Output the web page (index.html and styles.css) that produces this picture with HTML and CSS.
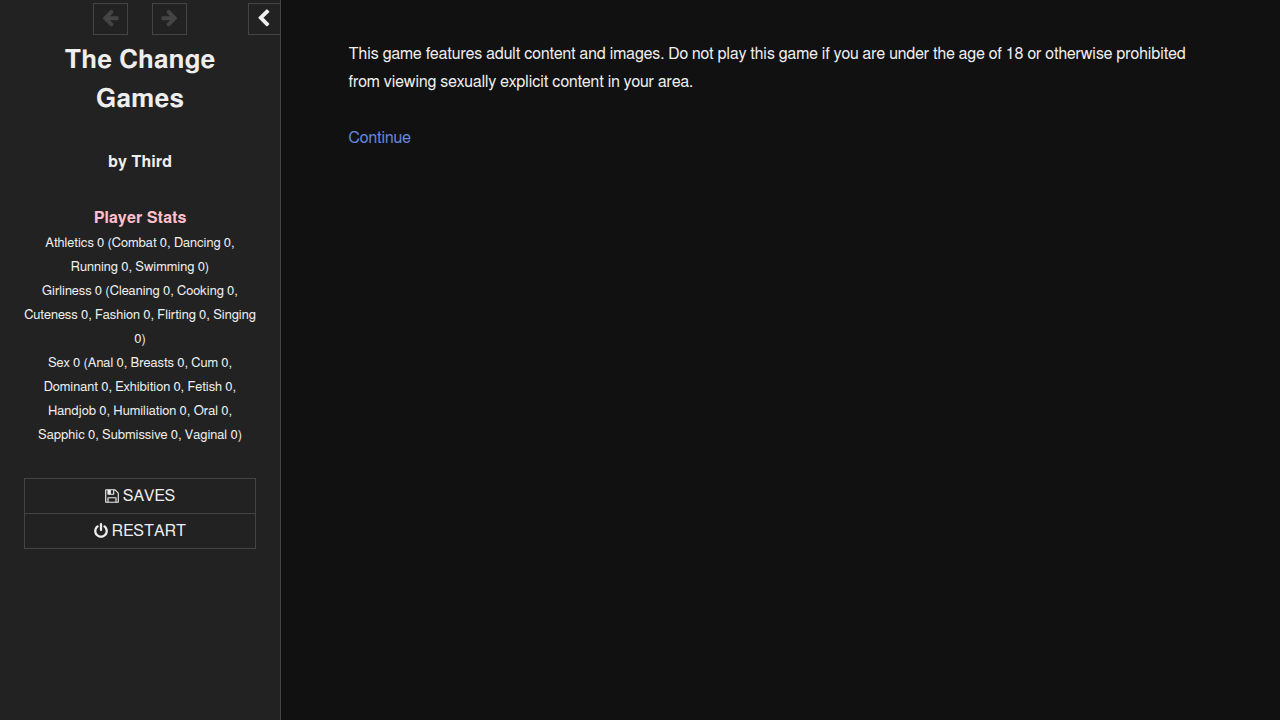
FILE: index.html
```html
<!DOCTYPE html>
<html lang="en">
<head>
    <meta charset="UTF-8">
    <meta name="viewport" content="width=device-width, initial-scale=1.0">
    <title>The Change Games</title>
    <link rel="stylesheet" href="styles.css">
</head>
<body>
    <aside class="ui-bar">
        <div class="tray">
            <button type="button" class="history" aria-label="Go back" disabled>
                <svg class="icon-large" viewBox="0 0 1792 1792"><path d="M1664 896v128q0 53-32.500 90.500t-84.500 37.500h-704l293 294q38 36 38 90t-38 90l-75 76q-37 37-90 37-52 0-91-37l-651-652q-37-37-37-90 0-52 37-91l651-650q38-38 91-38 52 0 90 38l75 74q38 38 38 91t-38 91l-293 293h704q52 0 84.500 37.500t32.500 90.500z"/></svg>
            </button>
            <button type="button" class="history" aria-label="Go forward" disabled>
                <svg class="icon-large" viewBox="0 0 1792 1792"><path transform="translate(1792 0) scale(-1 1)" d="M1664 896v128q0 53-32.500 90.500t-84.500 37.500h-704l293 294q38 36 38 90t-38 90l-75 76q-37 37-90 37-52 0-91-37l-651-652q-37-37-37-90 0-52 37-91l651-650q38-38 91-38 52 0 90 38l75 74q38 38 38 91t-38 91l-293 293h704q52 0 84.500 37.500t32.500 90.500z"/></svg>
            </button>
            <button type="button" class="toggle" aria-label="Toggle the UI bar">
                <svg class="icon-large" viewBox="0 0 1792 1792"><path d="M1427 301l-531 531 531 531q19 19 19 45t-19 45l-166 166q-19 19-45 19t-45-19l-742-742q-19-19-19-45t19-45l742-742q19-19 45-19t45 19l166 166q19 19 19 45t-19 45z"/></svg>
            </button>
        </div>
        <div class="ui-body">
            <h1>The Change Games</h1>
            <p class="author">by Third</p>
            <h2>Player Stats</h2>
            <div class="stats">
                <p>Athletics 0 (Combat 0, Dancing 0, Running 0, Swimming 0)</p>
                <p>Girliness 0 (Cleaning 0, Cooking 0, Cuteness 0, Fashion 0, Flirting 0, Singing 0)</p>
                <p>Sex 0 (Anal 0, Breasts 0, Cum 0, Dominant 0, Exhibition 0, Fetish 0, Handjob 0, Humiliation 0, Oral 0, Sapphic 0, Submissive 0, Vaginal 0)</p>
            </div>
            <nav class="menu">
                <button type="button">
                    <svg class="icon" viewBox="128 0 1536 1792"><path d="M512 1536h768v-384h-768v384zm896 0h128v-896q0-14-10-38.500t-20-34.500l-281-281q-10-10-34-20t-39-10v416q0 40-28 68t-68 28h-576q-40 0-68-28t-28-68v-416h-128v1280h128v-416q0-40 28-68t68-28h832q40 0 68 28t28 68v416zm-384-928v-320q0-13-9.500-22.500t-22.500-9.500h-192q-13 0-22.500 9.500t-9.500 22.500v320q0 13 9.500 22.500t22.500 9.500h192q13 0 22.500-9.500t9.500-22.500zm640 32v928q0 40-28 68t-68 28h-1344q-40 0-68-28t-28-68v-1344q0-40 28-68t68-28h928q40 0 88 20t76 48l280 280q28 28 48 76t20 88z"/></svg>
                    Saves
                </button>
                <button type="button">
                    <svg class="icon" viewBox="128 0 1536 1792"><path d="M1664 896q0 156-61 298t-164 245-245 164-298 61-298-61-245-164-164-245-61-298q0-182 80.500-343t226.500-270q43-32 95.500-25t83.500 50q32 42 24.500 94.500t-49.500 84.500q-98 74-151.500 181t-53.500 228q0 104 40.500 198.500t109.500 163.500 163.500 109.500 198.500 40.500 198.500-40.500 163.500-109.500 109.500-163.500 40.500-198.500q0-121-53.500-228t-151.500-181q-42-32-49.500-84.500t24.500-94.500q31-43 84-50t95 25q146 109 226.500 270t80.500 343zm-640-768v640q0 52-38 90t-90 38-90-38-38-90v-640q0-52 38-90t90-38 90 38 38 90z"/></svg>
                    Restart
                </button>
            </nav>
        </div>
    </aside>
    <main class="story">
        <div class="passage">
            <p>This game features adult content and images. Do not play this game if you are under the age of 18 or otherwise prohibited from viewing sexually explicit content in your area.</p>
            <a href="#continue">Continue</a>
        </div>
    </main>
</body>
</html>
```
FILE: styles.css
```css
* {
    box-sizing: border-box;
}

body {
    display: flex;
    min-height: 100vh;
    margin: 0;
    background-color: #111;
    color: #eee;
    font-family: FreeSans, "Liberation Sans", Arial, sans-serif;
    font-size: 16px;
    font-kerning: none;
    line-height: 28px;
}

h1, h2, p {
    margin: 0;
}

a {
    color: #68d;
    text-decoration: none;
}

a:hover {
    color: #8af;
    text-decoration: underline;
}

button {
    padding: 0;
    border: 1px solid #444;
    background-color: transparent;
    color: #eee;
    font: inherit;
    cursor: pointer;
}

button:disabled {
    color: #444;
    cursor: default;
}

svg {
    fill: currentColor;
}

/* Sidebar */
.ui-bar {
    flex: none;
    width: 281px;
    border-right: 1px solid #444;
    background-color: #222;
    text-align: center;
}

.tray {
    display: grid;
    grid-template-columns: 1fr 35px 35px 1fr;
    column-gap: 24px;
    padding-top: 3px;
}

.tray button {
    display: flex;
    justify-content: center;
    align-items: center;
    height: 32px;
    padding-bottom: 3px;
}

.history:first-child {
    grid-column: 2;
}

.tray .toggle {
    justify-self: end;
    width: 32px;
    padding: 0 2px 1px 0;
    border-right: none;
}

.icon-large {
    width: 19px;
    height: 19px;
}

.ui-body {
    padding: 6px 24px 24px;
}

h1 {
    font-size: 26px;
    line-height: 39px;
}

.author {
    margin: 29px 0 28px;
    font-weight: bold;
}

h2 {
    color: pink;
    font-size: 16px;
}

.stats {
    font-size: 13px;
    line-height: 24px;
}

/* Menu buttons */
.menu {
    display: flex;
    flex-direction: column;
    margin-top: 30px;
    border: 1px solid #444;
}

.menu button {
    display: flex;
    justify-content: center;
    align-items: center;
    gap: 4px;
    height: 34px;
    border: none;
    text-transform: uppercase;
}

.menu button + button {
    height: 35px;
    border-top: 1px solid #444;
}

.icon {
    width: 14px;
    height: 16px;
}

/* Passage */
.story {
    flex: 1;
    padding: 40px;
}

.passage {
    max-width: 864px;
    margin: 0 auto;
}

.passage p {
    margin-bottom: 28px;
}
```
